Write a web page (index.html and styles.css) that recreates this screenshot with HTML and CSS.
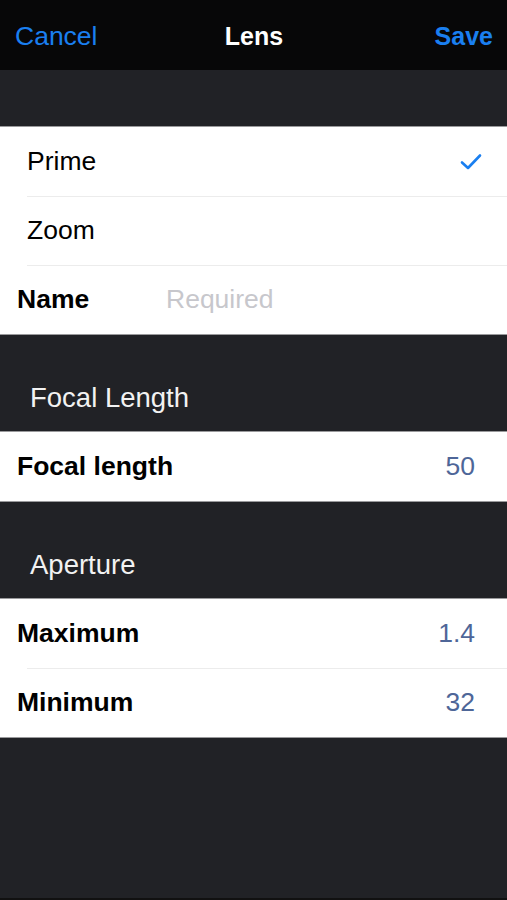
FILE: index.html
```html
<!DOCTYPE html>
<html lang="en">
<head>
    <meta charset="UTF-8">
    <meta name="viewport" content="width=device-width, initial-scale=1.0">
    <title>Lens</title>
    <link rel="stylesheet" href="styles.css">
</head>
<body>
    <div class="screen">
        <div class="navbar">
            <div class="nav-button">Cancel</div>
            <div class="nav-title">Lens</div>
            <div class="nav-button save">Save</div>
        </div>

        <div class="spacer"></div>

        <div class="group">
            <div class="row option">
                <span class="label">Prime</span>
                <svg class="check" width="22" height="18" viewBox="0 0 22 18">
                    <path d="M2 9.5 L8 15 L20 2.5" fill="none" stroke="#1a7ff0" stroke-width="2.6" stroke-linecap="round" stroke-linejoin="round"/>
                </svg>
            </div>
            <div class="row option">
                <span class="label">Zoom</span>
            </div>
            <div class="row field">
                <span class="label bold">Name</span>
                <span class="placeholder">Required</span>
            </div>
        </div>

        <div class="section-header">Focal Length</div>
        <div class="group">
            <div class="row field">
                <span class="label bold">Focal length</span>
                <span class="value">50</span>
            </div>
        </div>

        <div class="section-header">Aperture</div>
        <div class="group">
            <div class="row field">
                <span class="label bold">Maximum</span>
                <span class="value">1.4</span>
            </div>
            <div class="row field">
                <span class="label bold">Minimum</span>
                <span class="value">32</span>
            </div>
        </div>
    </div>
</body>
</html>
```

FILE: styles.css
```css
body {
    margin: 0;
    font-family: 'Liberation Sans', Arial, sans-serif;
    background-color: #212226;
}
.screen {
    height: 900px;
    background-color: #212226;
    border-bottom: 2px solid #111;
    box-sizing: border-box;
}
.navbar {
    height: 70px;
    background-color: #070708;
    display: flex;
    align-items: center;
    justify-content: space-between;
    padding: 2px 14px 0 15px;
    box-sizing: border-box;
}
.nav-button {
    color: #1a7ff0;
    font-size: 26.5px;
    width: 110px;
}
.nav-button.save {
    text-align: right;
    font-size: 25px;
    font-weight: bold;
}
.nav-title {
    color: #fff;
    font-size: 25px;
    font-weight: bold;
}
.spacer {
    height: 56px;
}
.group {
    background-color: #fff;
    border-top: 1px solid #9a9a9c;
    border-bottom: 1px solid #9a9a9c;
}
.row {
    height: 69px;
    display: flex;
    align-items: center;
    font-size: 26.5px;
    color: #000;
    position: relative;
    white-space: nowrap;
}
.row + .row::before {
    content: '';
    position: absolute;
    top: 0;
    left: 27px;
    right: 0;
    border-top: 1px solid #ececec;
}
.option {
    padding: 0 27px;
    justify-content: space-between;
}
.field {
    padding: 0 32px 0 17px;
}
.label.bold {
    font-weight: bold;
}
.field .label {
    min-width: 149px;
    flex-shrink: 0;
}
.placeholder {
    color: #c7c7cc;
}
.value {
    margin-left: auto;
    color: #4e6698;
}
.check {
    margin-right: -2px;
}
.section-header {
    height: 96px;
    box-sizing: border-box;
    padding: 47px 0 0 30px;
    color: #f2f2f2;
    font-size: 27.5px;
}
```
